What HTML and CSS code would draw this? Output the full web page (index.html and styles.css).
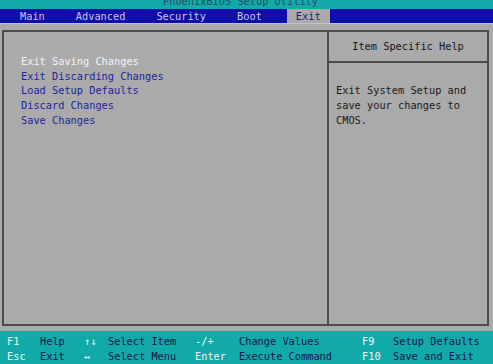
FILE: index.html
```html
<!DOCTYPE html>
<html lang="en">
<head>
  <meta charset="UTF-8" />
  <title>PhoenixBIOS Setup Utility</title>
  <link rel="stylesheet" href="styles.css">
</head>
<body>

  <div class="title-bar">
    <span class="title-text">PhoenixBIOS Setup Utility</span>
  </div>

  <div class="menu-bar">
    <span class="tab">Main</span>
    <span class="tab">Advanced</span>
    <span class="tab">Security</span>
    <span class="tab">Boot</span>
    <span class="tab active">Exit</span>
  </div>

  <div class="screen">
    <div class="panel">
      <div class="item selected">Exit Saving Changes</div>
      <div class="item">Exit Discarding Changes</div>
      <div class="item">Load Setup Defaults</div>
      <div class="item">Discard Changes</div>
      <div class="item">Save Changes</div>
    </div>
    <div class="help">
      <div class="help-title">Item Specific Help</div>
      <div class="help-text">
        Exit System Setup and<br>
        save your changes to<br>
        CMOS.
      </div>
    </div>
  </div>

  <div class="key-bar">
    <span class="key">F1</span>
    <span class="desc">Help</span>
    <span class="key">↑↓</span>
    <span class="desc">Select Item</span>
    <span class="key">-/+</span>
    <span class="desc">Change Values</span>
    <span class="key">F9</span>
    <span class="desc">Setup Defaults</span>

    <span class="key">Esc</span>
    <span class="desc">Exit</span>
    <span class="key">↔</span>
    <span class="desc">Select Menu</span>
    <span class="key">Enter</span>
    <span class="desc">Execute Command</span>
    <span class="key">F10</span>
    <span class="desc">Save and Exit</span>
  </div>

</body>
</html>
```

FILE: styles.css
```css
* {
  box-sizing: border-box;
}

body {
  margin: 0;
  width: 493px;
  height: 364px;
  overflow: hidden;
  background: #aaaaaa;
  font-family: 'DejaVu Sans Mono', 'Liberation Mono', monospace;
  font-size: 10.3px;
  display: flex;
  flex-direction: column;
}

.title-bar {
  height: 9px;
  background: #12a9a9;
  overflow: hidden;
  text-align: center;
  padding-right: 12px;
}

.title-text {
  display: block;
  line-height: 12px;
  margin-top: -5px;
  color: #23505e;
}

.menu-bar {
  height: 15px;
  background: #0d0daa;
  display: flex;
  gap: 15px;
  padding-left: 12px;
  border-bottom: 1px solid #c4c4c4;
}

.tab {
  padding: 0 8px;
  line-height: 15px;
  color: #c6c6f2;
}

.tab.active {
  background: #aaaaaa;
  color: #1a1a8c;
  margin-left: 2px;
  padding: 0 9px;
}

.screen {
  display: flex;
  height: 296px;
  margin: 6px 4px 0 2px;
  border: 2px solid #4c4c4c;
}

.panel {
  width: 325px;
  padding: 22px 0 0 17px;
  border-right: 2px solid #4c4c4c;
}

.item {
  line-height: 14.7px;
  color: #1e1ea4;
}

.item.selected {
  color: #f4f4f4;
}

.help {
  flex: 1;
}

.help-title {
  height: 31px;
  line-height: 29px;
  text-align: center;
  color: #161616;
  border-bottom: 2px solid #4c4c4c;
}

.help-text {
  padding: 20px 0 0 7px;
  line-height: 14.8px;
  color: #1a1a1a;
}

.key-bar {
  margin-top: auto;
  height: 33px;
  background: #12a9a9;
  display: grid;
  grid-template-columns: 33px 44px 24px 87px 44px 123px 31px auto;
  padding: 3px 0 0 7px;
  line-height: 14px;
}

.key {
  color: #eef6f6;
}

.desc {
  color: #15154a;
}
```
